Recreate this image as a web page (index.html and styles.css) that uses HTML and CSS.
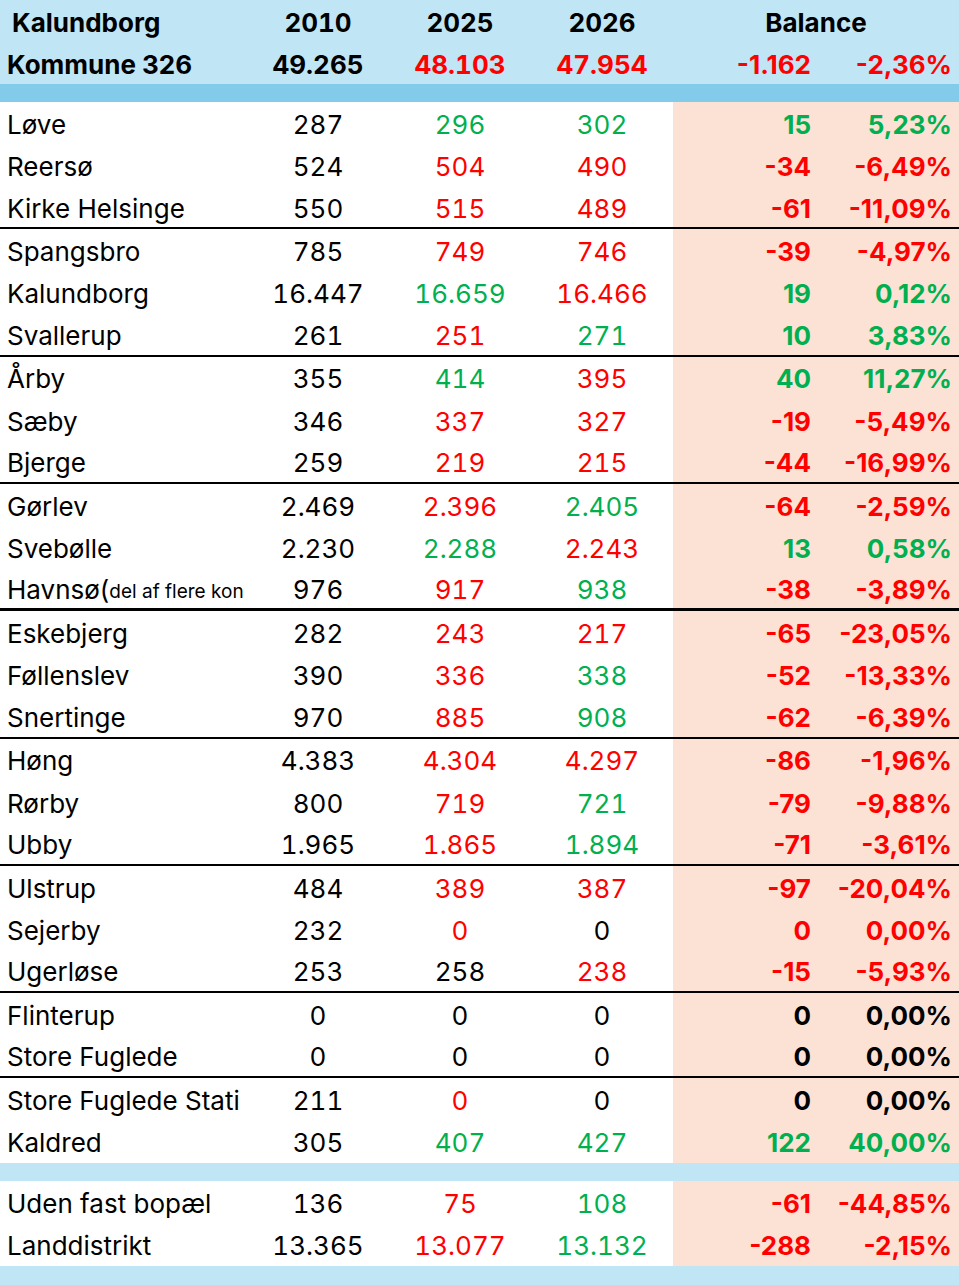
FILE: index.html
```html
<!DOCTYPE html>
<html lang="da">
<head>
<meta charset="utf-8">
<title>Kalundborg Kommune 326</title>
<link rel="stylesheet" href="styles.css">
</head>
<body>
<div class="sheet">
  <div class="row head">
    <div class="c name first">Kalundborg</div>
    <div class="c n b">2010</div>
    <div class="c n b">2025</div>
    <div class="c n b">2026</div>
    <div class="c bal-h b">Balance</div>
  </div>
  <div class="row head">
    <div class="c name b">Kommune 326</div>
    <div class="c n b">49.265</div>
    <div class="c n b r">48.103</div>
    <div class="c n b r">47.954</div>
    <div class="c d1 b r">-1.162</div>
    <div class="c d2 b r">-2,36%</div>
  </div>
  <div class="band dark"></div>

  <div class="row"><div class="c name">Løve</div><div class="c n">287</div><div class="c n g">296</div><div class="c n g">302</div><div class="c d1 p b g">15</div><div class="c d2 p b g">5,23%</div></div>
  <div class="row"><div class="c name">Reersø</div><div class="c n">524</div><div class="c n r">504</div><div class="c n r">490</div><div class="c d1 p b r">-34</div><div class="c d2 p b r">-6,49%</div></div>
  <div class="row sep"><div class="c name">Kirke Helsinge</div><div class="c n">550</div><div class="c n r">515</div><div class="c n r">489</div><div class="c d1 p b r">-61</div><div class="c d2 p b r">-11,09%</div></div>

  <div class="row"><div class="c name">Spangsbro</div><div class="c n">785</div><div class="c n r">749</div><div class="c n r">746</div><div class="c d1 p b r">-39</div><div class="c d2 p b r">-4,97%</div></div>
  <div class="row"><div class="c name">Kalundborg</div><div class="c n">16.447</div><div class="c n g">16.659</div><div class="c n r">16.466</div><div class="c d1 p b g">19</div><div class="c d2 p b g">0,12%</div></div>
  <div class="row sep"><div class="c name">Svallerup</div><div class="c n">261</div><div class="c n r">251</div><div class="c n g">271</div><div class="c d1 p b g">10</div><div class="c d2 p b g">3,83%</div></div>

  <div class="row"><div class="c name">Årby</div><div class="c n">355</div><div class="c n g">414</div><div class="c n r">395</div><div class="c d1 p b g">40</div><div class="c d2 p b g">11,27%</div></div>
  <div class="row"><div class="c name">Sæby</div><div class="c n">346</div><div class="c n r">337</div><div class="c n r">327</div><div class="c d1 p b r">-19</div><div class="c d2 p b r">-5,49%</div></div>
  <div class="row sep"><div class="c name">Bjerge</div><div class="c n">259</div><div class="c n r">219</div><div class="c n r">215</div><div class="c d1 p b r">-44</div><div class="c d2 p b r">-16,99%</div></div>

  <div class="row"><div class="c name">Gørlev</div><div class="c n">2.469</div><div class="c n r">2.396</div><div class="c n g">2.405</div><div class="c d1 p b r">-64</div><div class="c d2 p b r">-2,59%</div></div>
  <div class="row"><div class="c name">Svebølle</div><div class="c n">2.230</div><div class="c n g">2.288</div><div class="c n r">2.243</div><div class="c d1 p b g">13</div><div class="c d2 p b g">0,58%</div></div>
  <div class="row sep thick"><div class="c name">Havnsø(<span class="small">del af flere kon</span></div><div class="c n">976</div><div class="c n r">917</div><div class="c n g">938</div><div class="c d1 p b r">-38</div><div class="c d2 p b r">-3,89%</div></div>

  <div class="row"><div class="c name">Eskebjerg</div><div class="c n">282</div><div class="c n r">243</div><div class="c n r">217</div><div class="c d1 p b r">-65</div><div class="c d2 p b r">-23,05%</div></div>
  <div class="row"><div class="c name">Føllenslev</div><div class="c n">390</div><div class="c n r">336</div><div class="c n g">338</div><div class="c d1 p b r">-52</div><div class="c d2 p b r">-13,33%</div></div>
  <div class="row sep"><div class="c name">Snertinge</div><div class="c n">970</div><div class="c n r">885</div><div class="c n g">908</div><div class="c d1 p b r">-62</div><div class="c d2 p b r">-6,39%</div></div>

  <div class="row"><div class="c name">Høng</div><div class="c n">4.383</div><div class="c n r">4.304</div><div class="c n r">4.297</div><div class="c d1 p b r">-86</div><div class="c d2 p b r">-1,96%</div></div>
  <div class="row"><div class="c name">Rørby</div><div class="c n">800</div><div class="c n r">719</div><div class="c n g">721</div><div class="c d1 p b r">-79</div><div class="c d2 p b r">-9,88%</div></div>
  <div class="row sep"><div class="c name">Ubby</div><div class="c n">1.965</div><div class="c n r">1.865</div><div class="c n g">1.894</div><div class="c d1 p b r">-71</div><div class="c d2 p b r">-3,61%</div></div>

  <div class="row"><div class="c name">Ulstrup</div><div class="c n">484</div><div class="c n r">389</div><div class="c n r">387</div><div class="c d1 p b r">-97</div><div class="c d2 p b r">-20,04%</div></div>
  <div class="row"><div class="c name">Sejerby</div><div class="c n">232</div><div class="c n r">0</div><div class="c n">0</div><div class="c d1 p b r">0</div><div class="c d2 p b r">0,00%</div></div>
  <div class="row sep"><div class="c name">Ugerløse</div><div class="c n">253</div><div class="c n">258</div><div class="c n r">238</div><div class="c d1 p b r">-15</div><div class="c d2 p b r">-5,93%</div></div>

  <div class="row"><div class="c name">Flinterup</div><div class="c n">0</div><div class="c n">0</div><div class="c n">0</div><div class="c d1 p b">0</div><div class="c d2 p b">0,00%</div></div>
  <div class="row sep"><div class="c name">Store Fuglede</div><div class="c n">0</div><div class="c n">0</div><div class="c n">0</div><div class="c d1 p b">0</div><div class="c d2 p b">0,00%</div></div>

  <div class="row"><div class="c name">Store Fuglede Stati</div><div class="c n">211</div><div class="c n r">0</div><div class="c n">0</div><div class="c d1 p b">0</div><div class="c d2 p b">0,00%</div></div>
  <div class="row"><div class="c name">Kaldred</div><div class="c n">305</div><div class="c n g">407</div><div class="c n g">427</div><div class="c d1 p b g">122</div><div class="c d2 p b g">40,00%</div></div>
  <div class="band light"></div>

  <div class="row"><div class="c name">Uden fast bopæl</div><div class="c n">136</div><div class="c n r">75</div><div class="c n g">108</div><div class="c d1 p b r">-61</div><div class="c d2 p b r">-44,85%</div></div>
  <div class="row"><div class="c name">Landdistrikt</div><div class="c n">13.365</div><div class="c n r">13.077</div><div class="c n g">13.132</div><div class="c d1 p b r">-288</div><div class="c d2 p b r">-2,15%</div></div>
  <div class="band light last"></div>
</div>
</body>
</html>
```
FILE: styles.css
```css
html, body {
  margin: 0;
  padding: 0;
  background: #ffffff;
}
.sheet {
  width: 959px;
  font-family: Inter, "Open Sans", "Liberation Sans", sans-serif;
  font-size: 26px;
  color: #000000;
}
.row {
  display: grid;
  grid-template-columns: 247px 142px 142px 142px 143px 143px;
  height: 42.44px;
}
.row.head {
  height: 42px;
  background: #c0e5f5;
}
.c {
  box-sizing: border-box;
  display: flex;
  align-items: center;
  padding-top: 3px;
  white-space: nowrap;
  overflow: hidden;
  line-height: 1;
}
.name {
  padding-left: 7px;
}
.name.first {
  padding-left: 12px;
  font-weight: 700;
}
.n {
  justify-content: center;
  font-variant-numeric: tabular-nums;
}
.d1 {
  justify-content: flex-end;
  padding-right: 5px;
}
.d2 {
  justify-content: flex-end;
  padding-right: 7px;
}
.bal-h {
  grid-column: 5 / span 2;
  justify-content: center;
}
.p {
  background: #fbe2d5;
}
.b {
  font-weight: 700;
}
.r {
  color: #ff0000;
}
.g {
  color: #00b050;
}
.row.sep .c {
  border-bottom: 2px solid #000000;
}
.row.thick .c {
  border-bottom: 3px solid #000000;
}
.small {
  font-size: 19px;
  padding-top: 3px;
}
.band {
  height: 18px;
}
.band.dark {
  background: #83cbeb;
}
.band.light {
  background: #c0e5f5;
}
.band.last {
  height: 20px;
}
```
